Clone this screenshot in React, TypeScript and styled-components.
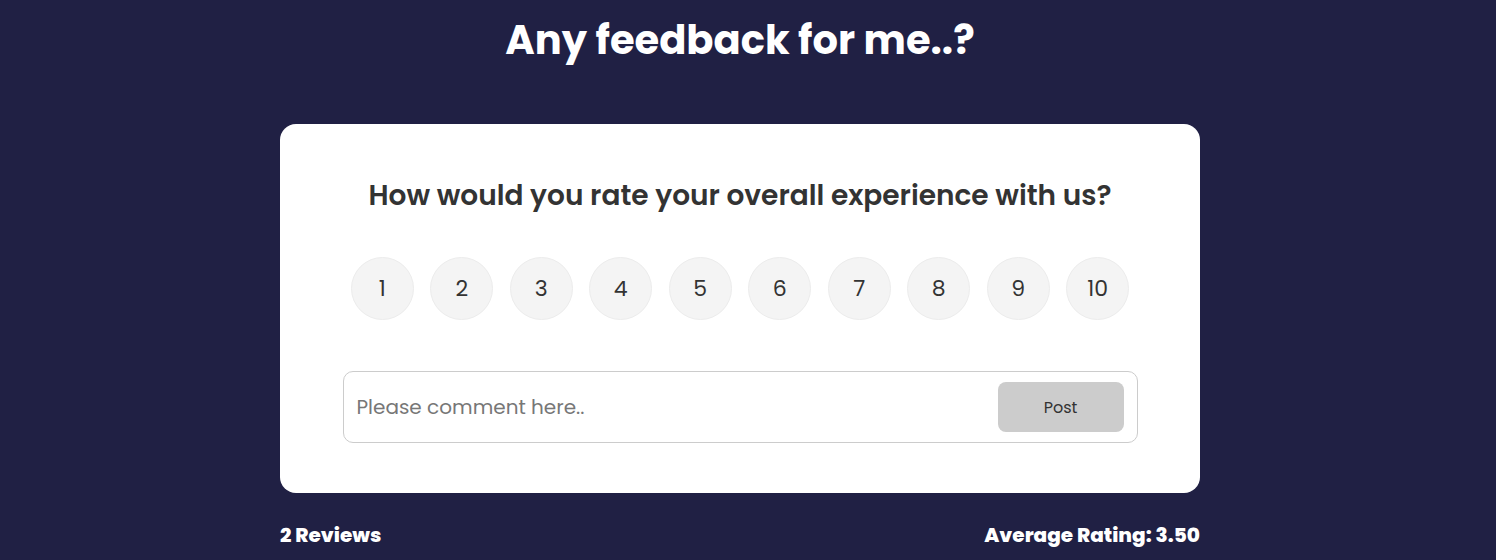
import React from "react";
import styled, { createGlobalStyle } from "styled-components";

const Global = createGlobalStyle`
  html, body { margin: 0; padding: 0; background: #202044; }
  body { font-family: "Poppins", "Inter", "Noto Sans", sans-serif; }
  * { box-sizing: border-box; }
`;

const Page = styled.div`
  width: 1480px;
  height: 560px;
  overflow: hidden;
  display: flex;
  flex-direction: column;
  align-items: center;
  background: #202044;
`;

const Title = styled.h1`
  margin: 15px 0 0;
  height: 50px;
  line-height: 50px;
  font-size: 40px;
  font-weight: 700;
  color: #ffffff;
`;

const Card = styled.div`
  margin-top: 59px;
  width: 920px;
  height: 369px;
  background: #ffffff;
  border-radius: 16px;
  padding: 54px 62px 0;
  display: flex;
  flex-direction: column;
  align-items: center;
`;

const Question = styled.h2`
  margin: 0;
  height: 36px;
  line-height: 36px;
  font-size: 28px;
  font-weight: 600;
  color: #333333;
`;

const Ratings = styled.div`
  margin-top: 43px;
  display: flex;
  gap: 16.5px;
`;

const RatingButton = styled.button`
  width: 63px;
  height: 63px;
  border-radius: 50%;
  border: 1px solid #ececec;
  background: #f4f4f4;
  color: #333333;
  font-family: inherit;
  font-size: 22px;
  font-weight: 400;
  display: flex;
  align-items: center;
  justify-content: center;
  padding: 0;
  cursor: pointer;
`;

const Form = styled.div`
  margin-top: 51px;
  width: 795px;
  height: 72px;
  border: 1px solid #cccccc;
  border-radius: 10px;
  display: flex;
  align-items: center;
  padding: 0 13px 0 13px;
`;

const Input = styled.input`
  flex: 1;
  border: none;
  outline: none;
  padding: 0;
  font-family: inherit;
  font-size: 20px;
  color: #333;
  background: transparent;
  &::placeholder { color: #777777; }
`;

const PostButton = styled.button`
  width: 126px;
  height: 50px;
  border: none;
  border-radius: 8px;
  background: #cccccc;
  color: #333333;
  font-family: inherit;
  font-size: 16px;
  cursor: pointer;
`;

const Footer = styled.div`
  margin-top: 27px;
  width: 920px;
  display: flex;
  justify-content: space-between;
  color: #ffffff;
  font-size: 20px;
  font-weight: 800;
  line-height: 30px;
`;

export default function App() {
  return (
    <>
      <Global />
      <Page>
        <Title>Any feedback for me..?</Title>
        <Card>
          <Question>How would you rate your overall experience with us?</Question>
          <Ratings>
            {[1, 2, 3, 4, 5, 6, 7, 8, 9, 10].map((n) => (
              <RatingButton key={n}>{n}</RatingButton>
            ))}
          </Ratings>
          <Form>
            <Input placeholder="Please comment here.." />
            <PostButton>Post</PostButton>
          </Form>
        </Card>
        <Footer>
          <span>2 Reviews</span>
          <span>Average Rating: 3.50</span>
        </Footer>
      </Page>
    </>
  );
}
